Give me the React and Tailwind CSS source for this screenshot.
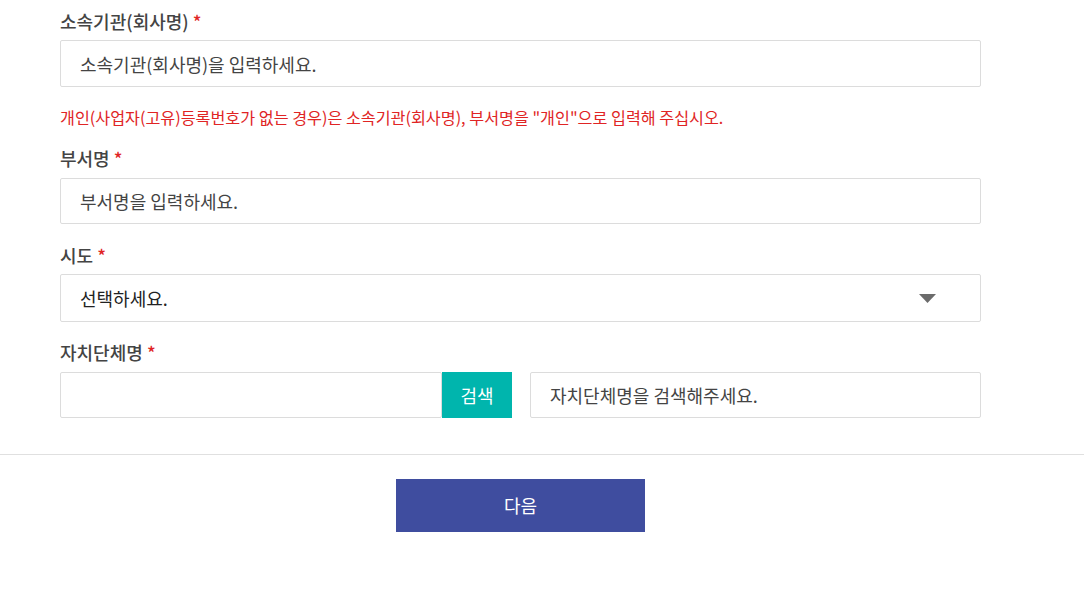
import React from 'react';

const Label = ({ children, className = '' }) => (
  <div className={`text-[18px] font-medium leading-[22px] text-[#444] ${className}`}>
    {children} <span className="text-[#e02424]">*</span>
  </div>
);

const inputCls =
  'h-full w-full rounded-[2px] border border-[#dcdcdc] bg-white px-[19px] text-[18px] text-[#333] placeholder:text-[#444] outline-none';

export default function App() {
  return (
    <div
      className="min-h-[594px] w-[1084px] bg-white"
      style={{ fontFamily: '"Noto Sans CJK KR", "Noto Sans", sans-serif' }}
    >
      <div className="w-[1041px] px-[60px] pt-[10px]">
        <Label>소속기관(회사명)</Label>
        <div className="mt-[8px] h-[47px]">
          <input className={inputCls} placeholder="소속기관(회사명)을 입력하세요." />
        </div>
        <p className="mt-[19px] text-[16.2px] leading-[22px] text-[#e02424]">
          개인(사업자(고유)등록번호가 없는 경우)은 소속기관(회사명), 부서명을 "개인"으로 입력해 주십시오.
        </p>

        <Label className="mt-[19px]">부서명</Label>
        <div className="mt-[9px] h-[46px]">
          <input className={inputCls} placeholder="부서명을 입력하세요." />
        </div>

        <Label className="mt-[20px]">시도</Label>
        <div className="mt-[8px] flex h-[48px] items-center justify-between rounded-[2px] border border-[#dcdcdc] bg-white pl-[19px] pr-[44px]">
          <span className="text-[18px] text-[#222]">선택하세요.</span>
          <svg width="17" height="9" viewBox="0 0 17 9">
            <path d="M0 0 H17 L8.5 9 Z" fill="#6b6b6b" />
          </svg>
        </div>

        <Label className="mt-[19px]">자치단체명</Label>
        <div className="mt-[9px] flex h-[46px]">
          <div className="h-full w-[382px]">
            <input className={inputCls} />
          </div>
          <button className="h-full w-[70px] bg-[#00b5ad] text-[18px] text-white">검색</button>
          <div className="ml-[18px] h-full flex-1">
            <input className={inputCls} placeholder="자치단체명을 검색해주세요." />
          </div>
        </div>
      </div>

      <div className="mt-[36px] border-t border-[#e0e0e0]" />

      <div className="flex pl-[396px] pt-[24px]">
        <button className="h-[53px] w-[249px] bg-[#3f4d9f] text-[18px] text-white">다음</button>
      </div>
    </div>
  );
}
